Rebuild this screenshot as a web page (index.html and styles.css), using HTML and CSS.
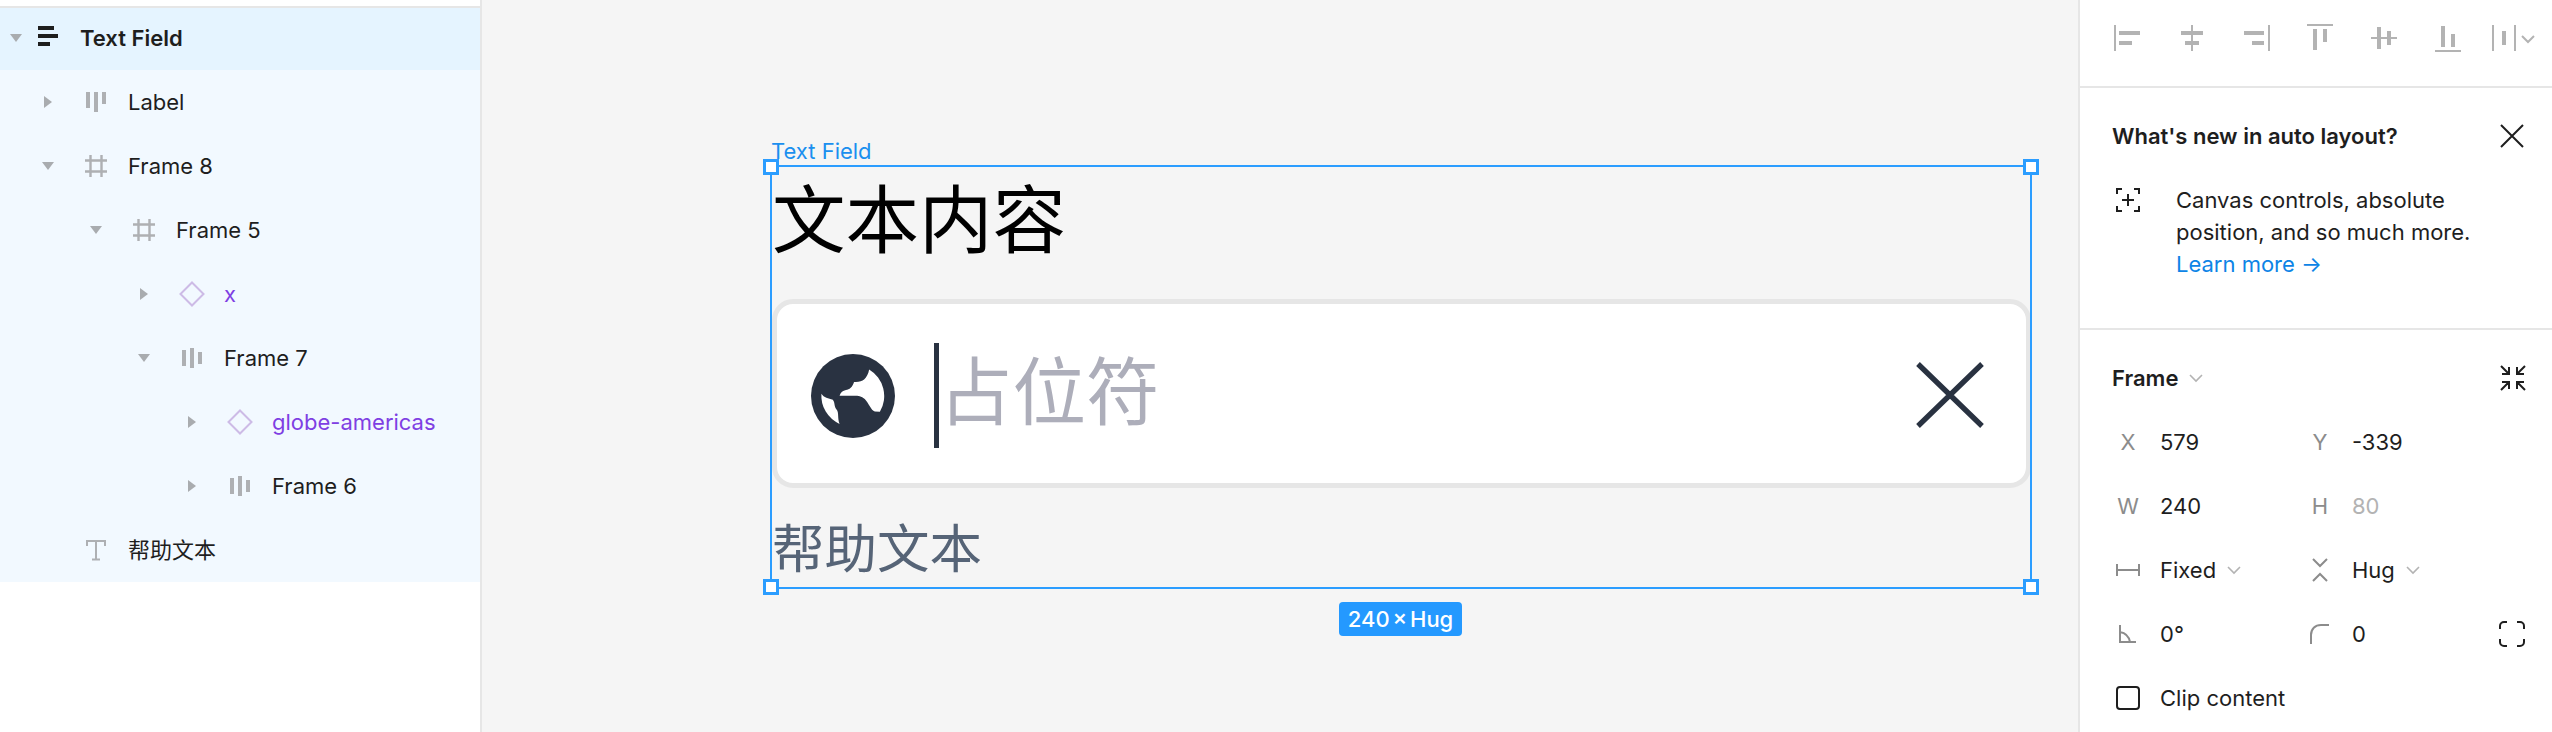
FILE: index.html
```html
<!DOCTYPE html>
<html lang="zh">
<head>
<meta charset="utf-8">
<title>Text Field</title>
<link rel="stylesheet" href="styles.css">
</head>
<body>
<svg class="sprite" width="0" height="0" aria-hidden="true">
  <symbol id="tri-down" viewBox="0 0 32 32"><path d="M10 12h12l-6 8z"/></symbol>
  <symbol id="tri-right" viewBox="0 0 32 32"><path d="M12 10l8 6-8 6z"/></symbol>
  <symbol id="ic-row-top" viewBox="0 0 32 32"><path d="M6 6h4v16H6zM14 6h4v20h-4zM22 6h4v12h-4z"/></symbol>
  <symbol id="ic-row-mid" viewBox="0 0 32 32"><path d="M6 8h4v16H6zM14 6h4v20h-4zM22 10h4v12h-4z"/></symbol>
  <symbol id="ic-frame" viewBox="0 0 32 32"><path d="M5 10.500h22M5 21.500h22M10.500 5v22M21.500 5v22" fill="none" stroke="currentColor" stroke-width="2.400"/></symbol>
  <symbol id="ic-comp" viewBox="0 0 32 32"><path d="M16 4.500L27.500 16 16 27.500 4.500 16z" fill="none" stroke="currentColor" stroke-width="2"/></symbol>
  <symbol id="ic-text" viewBox="0 0 32 32"><path d="M7 12V7h18v5M16 7v19M12 25.500h8" fill="none" stroke="currentColor" stroke-width="2"/></symbol>
  <symbol id="ic-chev" viewBox="0 0 16 16"><path d="M2 5l6 6 6-6" fill="none" stroke="currentColor" stroke-width="1.600"/></symbol>
</svg>
<div class="app">
  <aside class="layers">
    <div class="layer-list">
      <div class="layer layer-selected">
        <svg class="tri"><use href="#tri-down"/></svg>
        <svg class="lic lic-dark" viewBox="0 0 32 32"><path d="M6 4h16v4H6zM6 12h20v4H6zM6 20h12v4H6z"/></svg>
        <span class="lname lname-bold">Text Field</span>
      </div>
      <div class="layer d1">
        <svg class="tri"><use href="#tri-right"/></svg>
        <svg class="lic"><use href="#ic-row-top"/></svg>
        <span class="lname">Label</span>
      </div>
      <div class="layer d1">
        <svg class="tri"><use href="#tri-down"/></svg>
        <svg class="lic"><use href="#ic-frame"/></svg>
        <span class="lname">Frame 8</span>
      </div>
      <div class="layer d2">
        <svg class="tri"><use href="#tri-down"/></svg>
        <svg class="lic"><use href="#ic-frame"/></svg>
        <span class="lname">Frame 5</span>
      </div>
      <div class="layer d3">
        <svg class="tri"><use href="#tri-right"/></svg>
        <svg class="lic lic-comp"><use href="#ic-comp"/></svg>
        <span class="lname lname-comp">x</span>
      </div>
      <div class="layer d3">
        <svg class="tri"><use href="#tri-down"/></svg>
        <svg class="lic"><use href="#ic-row-mid"/></svg>
        <span class="lname">Frame 7</span>
      </div>
      <div class="layer d4">
        <svg class="tri"><use href="#tri-right"/></svg>
        <svg class="lic lic-comp"><use href="#ic-comp"/></svg>
        <span class="lname lname-comp">globe-americas</span>
      </div>
      <div class="layer d4">
        <svg class="tri"><use href="#tri-right"/></svg>
        <svg class="lic"><use href="#ic-row-mid"/></svg>
        <span class="lname">Frame 6</span>
      </div>
      <div class="layer d1">
        <span class="tri"></span>
        <svg class="lic"><use href="#ic-text"/></svg>
        <span class="lname">帮助文本</span>
      </div>
    </div>
  </aside>

  <main class="canvas">
    <div class="frame">
      <div class="frame-tag">Text Field</div>
      <div class="f-title">文本内容</div>
      <div class="f-input">
        <div class="f-lead">
          <svg class="f-globe" viewBox="0 0 250 250">
            <circle class="globe-disc" cx="125" cy="125" r="125"/>
            <path class="globe-land" d="M85 124C88 114 95 109 104 107C114 106 124 98 128 83C140 84 152 82 158 76C166 68 171 58 173 46A92 92 0 0 1 205 172L190 171C178 168 172 146 160 134C150 125 140 124 130 124Z"/>
            <path class="globe-land" d="M31 118C38 130 52 132 65 136C72 145 68 155 76 165C84 175 78 190 85 208A92 92 0 0 1 31 118Z"/>
          </svg>
          <span class="f-caret"></span>
          <span class="f-placeholder">占位符</span>
        </div>
        <svg class="f-clear" viewBox="0 0 84 84"><path d="M10 10l64 62M74 10L10 72"/></svg>
      </div>
      <div class="f-help">帮助文本</div>
      <div class="selection">
        <span class="handle h-tl"></span>
        <span class="handle h-tr"></span>
        <span class="handle h-bl"></span>
        <span class="handle h-br"></span>
      </div>
      <div class="size-badge">240 × Hug</div>
    </div>
  </main>

  <aside class="props">
    <div class="align-row">
      <span class="slot"><svg class="alic" viewBox="0 0 32 32"><path d="M2 3h2v26H2zM7 9h21v4H7zM7 19h13v4H7z"/></svg></span>
      <span class="slot"><svg class="alic" viewBox="0 0 32 32"><path d="M15 3h2v26h-2zM5 9h22v4H5zM9 19h14v4H9z"/></svg></span>
      <span class="slot"><svg class="alic" viewBox="0 0 32 32"><path d="M28 3h2v26h-2zM4 9h20v4H4zM12 19h12v4H12z"/></svg></span>
      <span class="slot"><svg class="alic" viewBox="0 0 32 32"><path d="M3 2h26v2H3zM9 7h4v21H9zM19 7h4v13h-4z"/></svg></span>
      <span class="slot"><svg class="alic" viewBox="0 0 32 32"><path d="M3 15h26v2H3zM9 5h4v22H9zM19 9h4v14h-4z"/></svg></span>
      <span class="slot"><svg class="alic" viewBox="0 0 32 32"><path d="M3 28h26v2H3zM9 4h4v21H9zM19 12h4v13h-4z"/></svg></span>
      <span class="slot slot-tidy"><svg class="alic alic-wide" viewBox="0 0 48 32"><path d="M4 3h2v26H4zM26 3h2v26h-2zM14 9h4v14h-4z"/><path class="alic-chev" d="M34 14l6 6 6-6"/></svg></span>
    </div>

    <section class="news">
      <div class="news-head">
        <h2 class="news-title">What's new in auto layout?</h2>
        <svg class="ink-icon news-close" viewBox="0 0 32 32"><path d="M5 5l22 22M27 5L5 27"/></svg>
      </div>
      <div class="news-body">
        <span class="news-icon"><svg class="ink-icon" viewBox="0 0 24 24"><path d="M1 6V1h5M18 1h5v5M23 18v5h-5M6 23H1v-5M12 6v12M6 12h12"/></svg></span>
        <p class="news-text">Canvas controls, absolute<br>position, and so much more.<br><a class="news-link">Learn more →</a></p>
      </div>
    </section>

    <section class="frame-props">
      <div class="fp-head">
        <span class="fp-title">Frame</span>
        <svg class="chev fp-chev"><use href="#ic-chev"/></svg>
        <svg class="ink-icon fp-collapse" viewBox="0 0 26 26"><path d="M1 1l8 8M9 2v7H2M25 1l-8 8M17 2v7h7M1 25l8-8M9 24v-7H2M25 25l-8-8M17 24v-7h7"/></svg>
      </div>
      <div class="fp-grid">
        <span class="fp-label">X</span><span class="fp-val">579</span>
        <span class="fp-label">Y</span><span class="fp-val">-339</span><span></span>

        <span class="fp-label">W</span><span class="fp-val">240</span>
        <span class="fp-label">H</span><span class="fp-val fp-val-off">80</span><span></span>

        <span class="fp-label"><svg class="gr-icon" width="24" height="12" viewBox="0 0 24 12"><path d="M1 0v12M23 0v12M1 6h22"/></svg></span>
        <span class="fp-val">Fixed<svg class="chev"><use href="#ic-chev"/></svg></span>
        <span class="fp-label"><svg class="gr-icon" width="16" height="24" viewBox="0 0 16 24"><path d="M1 1l7 7 7-7M1 23l7-7 7 7"/></svg></span>
        <span class="fp-val">Hug<svg class="chev"><use href="#ic-chev"/></svg></span><span></span>

        <span class="fp-label"><svg class="gr-icon" width="18" height="18" viewBox="0 0 18 18"><path d="M1 0v17h16M1 7c6 1 9 5 10 10"/></svg></span>
        <span class="fp-val">0°</span>
        <span class="fp-label"><svg class="gr-icon" width="20" height="20" viewBox="0 0 20 20"><path d="M1 20V11C1 5 5 1 11 1h8"/></svg></span>
        <span class="fp-val">0</span>
        <span class="fp-label"><svg class="ink-icon" width="26" height="26" viewBox="0 0 26 26"><path d="M1 8V5a4 4 0 0 1 4-4h3M18 1h3a4 4 0 0 1 4 4v3M25 18v3a4 4 0 0 1-4 4h-3M8 25H5a4 4 0 0 1-4-4v-3"/></svg></span>

        <span class="fp-label"><span class="checkbox"></span></span>
        <span class="fp-val fp-val-wide">Clip content</span>
      </div>
    </section>
  </aside>
</div>
</body>
</html>
```
FILE: styles.css
```css
* { box-sizing: border-box; }
html, body { margin: 0; padding: 0; height: 100%; overflow: hidden; }
body {
  font-family: "Inter", "Noto Sans CJK SC", sans-serif;
  font-size: 22px;
  color: #1e1e1e;
  background: #fff;
}
.sprite { position: absolute; }
svg { display: block; flex: none; }

.app { display: flex; height: 732px; }

/* layers */
.layers {
  width: 482px;
  flex: none;
  padding-top: 6px;
  border-right: 2px solid #e6e6e6;
  background: #fff;
}
.layer-list { background: #f2f9ff; border-top: 2px solid #e6e6e6; }
.layer { display: flex; align-items: center; height: 64px; }
.layer-selected { height: 62px; padding-bottom: 2px; background: #e5f4ff; }
.d1 { padding-left: 32px; }
.d2 { padding-left: 80px; }
.d3 { padding-left: 128px; }
.d4 { padding-left: 176px; }
.tri { width: 32px; height: 32px; fill: #a9acaf; flex: none; }
.lic { width: 32px; height: 32px; margin-left: 16px; fill: #aeb0b3; color: #aeb0b3; }
.layer-selected .lic { margin-left: 0; }
.lic-dark { fill: #1e1e1e; }
.lic-comp { color: #cdbbe6; }
.lname { margin-left: 16px; line-height: 32px; white-space: nowrap; }
.lname-bold { font-weight: 600; }
.lname-comp { color: #7f3fe3; }

/* canvas */
.canvas { flex: 1; position: relative; background: #f5f5f5; }
.frame {
  position: absolute;
  left: 290px;
  top: 167px;
  width: 1260px;
  height: 421px;
  display: flex;
  flex-direction: column;
}
.frame-tag {
  position: absolute;
  left: -1px;
  bottom: 100%;
  font-size: 22px;
  line-height: 24px;
  margin-bottom: 4px;
  color: #1a8fef;
  white-space: nowrap;
}
.f-title {
  height: 132px;
  font-size: 73.5px;
  line-height: 107px;
  color: #000;
}
.f-input {
  height: 189px;
  flex: none;
  display: flex;
  align-items: center;
  justify-content: space-between;
  padding: 4px 34px 0;
  margin-right: 1px;
  background: #fff;
  border: 5px solid #e6e6e6;
  border-radius: 21px;
}
.f-lead { display: flex; align-items: center; }
.f-globe { width: 84px; height: 84px; }
.globe-disc { fill: #293241; }
.globe-land { fill: #fff; }
.f-caret { width: 5px; height: 105px; margin-left: 39px; background: #293241; }
.f-placeholder { font-size: 73.5px; line-height: 105px; margin-bottom: 6px; color: #adaeba; }
.f-clear { width: 84px; height: 84px; fill: none; stroke: #293241; stroke-width: 5.250; }
.f-help {
  margin-top: auto;
  font-size: 52.500px;
  line-height: 78px;
  color: #566477;
}

/* selection overlay */
.selection {
  position: absolute;
  inset: -2px 0 -1px -2px;
  border: 2px solid #2b9dff;
  pointer-events: none;
}
.handle {
  position: absolute;
  width: 16px;
  height: 16px;
  background: #fff;
  border: 3px solid #2b9dff;
}
.h-tl { left: -9px; top: -8px; }
.h-tr { right: -9px; top: -8px; }
.h-bl { left: -9px; bottom: -8px; }
.h-br { right: -9px; bottom: -8px; }
.size-badge {
  position: absolute;
  left: 567px;
  top: 435px;
  width: 123px;
  height: 34px;
  text-align: center;
  font-size: 22px;
  line-height: 34px;
  font-weight: 500;
  word-spacing: -3px;
  color: #fff;
  background: #2499ff;
  border-radius: 4px;
  white-space: nowrap;
}

/* properties */
.props { width: 474px; flex: none; border-left: 2px solid #e6e6e6; background: #fff; }
.align-row {
  display: flex;
  height: 88px;
  padding: 6px 0 0 16px;
  border-bottom: 2px solid #e6e6e6;
}
.slot { width: 64px; height: 64px; display: flex; align-items: center; justify-content: center; flex: none; }
.slot-tidy { justify-content: flex-start; padding-left: 8px; }
.alic { width: 32px; height: 32px; fill: #b3b3b3; }
.alic-wide { width: 48px; }
.alic-chev { fill: none; stroke: #b3b3b3; stroke-width: 2; }
.ink-icon { fill: none; stroke: #1e1e1e; stroke-width: 2; }
.gr-icon { fill: none; stroke: #8c8c8c; stroke-width: 2; }

.news { padding: 16px 24px 48px 32px; border-bottom: 2px solid #e6e6e6; height: 242px; }
.news-head { display: flex; align-items: center; justify-content: space-between; height: 64px; }
.news-title { margin: 0; font-size: 22px; font-weight: 600; line-height: 32px; }
.news-close { width: 32px; height: 32px; }
.news-body { display: flex; margin: 16px 0 0 -16px; }
.news-icon { width: 64px; height: 32px; display: flex; align-items: center; justify-content: center; flex: none; }
.news-icon svg { width: 24px; height: 24px; }
.news-text { margin: 0 0 0 16px; line-height: 32px; white-space: nowrap; }
.news-link { color: #0d84e6; }

.frame-props { padding: 16px 0 0 16px; }
.fp-head { display: flex; align-items: center; height: 64px; padding: 0 26px 0 16px; }
.fp-title { font-weight: 600; }
.fp-chev { margin-left: 10px; }
.fp-collapse { width: 26px; height: 26px; margin-left: auto; }
.fp-grid {
  display: grid;
  grid-template-columns: 64px 128px 64px 128px 64px;
  grid-auto-rows: 64px;
  align-items: center;
}
.fp-label {
  display: flex;
  align-items: center;
  justify-content: center;
  color: #8c8c8c;
}
.fp-val { display: flex; align-items: center; gap: 10px; white-space: nowrap; }
.fp-val-off { color: #b3b3b3; }
.fp-val-wide { grid-column: span 3; }
.chev { width: 16px; height: 16px; color: #b3b3b3; }
.checkbox { width: 24px; height: 24px; border: 2px solid #1e1e1e; border-radius: 4px; }
```
